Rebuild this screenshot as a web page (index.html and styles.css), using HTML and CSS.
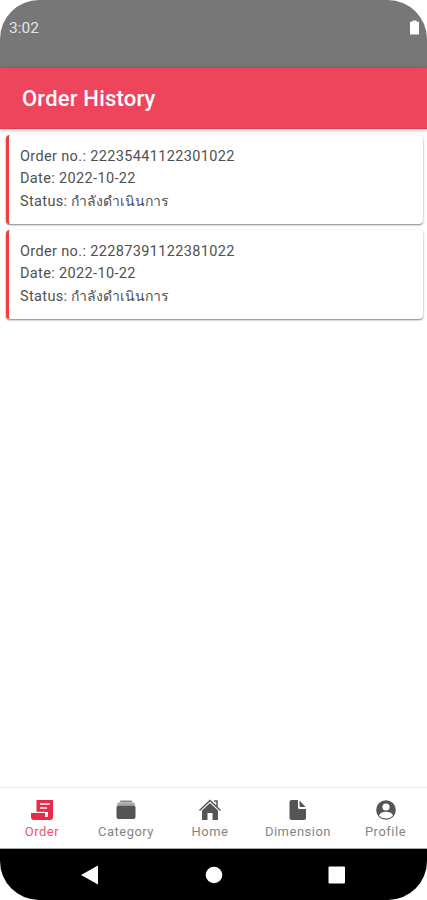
FILE: index.html
```html
<!DOCTYPE html>
<html lang="th">

<head>
  <title>Order History</title>
  <meta charset="UTF-8">
  <meta name="viewport" content="width=device-width, initial-scale=1.0">
  <link rel="stylesheet" href="styles.css">
</head>

<body>
  <div class="phone">
    <div class="status">
      <span class="time">3:02</span>
      <svg class="battery" width="9" height="15" viewBox="0 0 9 15">
        <path d="M0 2l2.500-.5V.5h4v1L9 2v12.500H0z" fill="#fff" />
      </svg>
    </div>
    <header class="bar">
      <h1>Order History</h1>
    </header>

    <main class="list">
      <div class="card">
        <p>Order no.: 22235441122301022</p>
        <p>Date: 2022-10-22</p>
        <p>Status: <span class="thai">กำลังดำเนินการ</span></p>
      </div>
      <div class="card">
        <p>Order no.: 22287391122381022</p>
        <p>Date: 2022-10-22</p>
        <p>Status: <span class="thai">กำลังดำเนินการ</span></p>
      </div>
    </main>

    <nav class="tabs">
      <a class="tab active">
        <svg width="24" height="22" viewBox="0 0 24 22">
          <path d="M6.500 1H23v17.500a2.500 2.500 0 0 1-5 0V13H6.500z" fill="currentColor" />
          <path d="M1 14h14v4.500q0 1.500 1.500 2.500H4q-3 0-3-3z" fill="currentColor" />
          <path d="M15 18h5v3h-5z" fill="currentColor" />
          <path d="M10 5h10M10 9h7" stroke="#fff" stroke-width="1.300" />
          <path d="M6 13.300h10v4.500" stroke="#fff" stroke-width=".8" fill="none" />
        </svg>
        <span>Order</span>
      </a>
      <a class="tab">
        <svg width="24" height="22" viewBox="0 0 24 22">
          <path d="M6.500 1.500h11l1 2h-13z" fill="#888" />
          <path d="M4 3.500h16l1.500 3h-19z" fill="#aaa" />
          <rect x="2.500" y="6.500" width="19" height="13.500" rx="2" fill="currentColor" />
        </svg>
        <span>Category</span>
      </a>
      <a class="tab">
        <svg width="24" height="22" viewBox="0 0 24 22">
          <path d="M1.500 11.500L12 1.500l10.500 10M16 2h3v6" fill="none" stroke="currentColor" stroke-width="1.500" />
          <path d="M12 4l8 7.500V21h-5.500v-7h-5v7H4v-9.500z" fill="currentColor" />
        </svg>
        <span>Home</span>
      </a>
      <a class="tab">
        <svg width="24" height="22" viewBox="0 0 24 22">
          <path d="M5.500 1H12v7.500q0 1.500 1.500 1.500H20v9q0 2-2 2H5.500q-2 0-2-2V3q0-2 2-2zM13.500 1.500L19.500 8h-4.500q-1.500 0-1.500-1.500z" fill="currentColor" />
        </svg>
        <span>Dimension</span>
      </a>
      <a class="tab">
        <svg width="24" height="22" viewBox="0 0 24 22">
          <circle cx="12" cy="11" r="9.800" fill="currentColor" />
          <circle cx="12" cy="8" r="3.600" fill="#fff" />
          <path d="M5 16.200C6.500 13.500 9 12.800 12 12.800s5.500.7 7 3.400c-1.700 2.100-4.200 3.300-7 3.300s-5.300-1.200-7-3.300z" fill="#fff" />
        </svg>
        <span>Profile</span>
      </a>
    </nav>

    <div class="keys">
      <svg width="18" height="20" viewBox="0 0 18 20">
        <path d="M0 10L17 .5v19z" fill="#fff" />
      </svg>
      <svg width="18" height="18" viewBox="0 0 18 18">
        <circle cx="9" cy="9" r="8.300" fill="#fff" />
      </svg>
      <svg width="18" height="18" viewBox="0 0 18 18">
        <rect x=".5" y=".5" width="16.500" height="17" rx="1" fill="#fff" />
      </svg>
    </div>
  </div>
</body>

</html>
```
FILE: styles.css
```css
* {
  box-sizing: border-box;
}

body {
  margin: 0;
  background-color: #fff;
  font-family: Roboto, "Noto Sans", sans-serif;
}

.phone {
  display: flex;
  flex-direction: column;
  height: 900px;
  overflow: hidden;
  border-radius: 39px;
  background-color: #fff;
}

.status {
  display: flex;
  justify-content: space-between;
  height: 68px;
  padding: 19px 8px 0 9px;
  background-color: #777;
}

.time {
  color: #e4e4e4;
  font-size: 15.5px;
  line-height: 19px;
}

.battery {
  margin-top: 1px;
}

.bar {
  height: 61px;
  padding-left: 22px;
  background-color: #ee445c;
  border-bottom: 1px solid #d83f58;
  box-shadow: 0 1px 4px rgba(0, 0, 0, .3);
}

h1 {
  margin: 0;
  color: #fff;
  font-size: 22px;
  font-weight: 500;
  line-height: 61px;
  letter-spacing: .2px;
}

.list {
  flex: 1;
  padding: 6px 4px 0 6px;
}

.card {
  height: 89px;
  margin-bottom: 6px;
  padding: 11px 0 0 11px;
  border-left: 3px solid #f13c40;
  border-radius: 4px;
  background-color: #fff;
  box-shadow: 0 1px 2px rgba(0, 0, 0, .5);
}

.card p {
  height: 22px;
  margin: 0;
  color: #505050;
  font-size: 14.5px;
  line-height: 22px;
  letter-spacing: .35px;
}

.card .thai {
  font-size: 14px;
  letter-spacing: 0;
}

.tabs {
  display: grid;
  grid-template-columns: 84px 84px 84px 92px 83px;
  height: 62px;
  border-top: 1px solid #eee;
  border-bottom: 1px solid #aaa;
}

.tab {
  display: flex;
  flex-direction: column;
  align-items: center;
  padding-top: 11px;
  color: #555;
}

.tab span {
  color: #858585;
  font-size: 13px;
  line-height: 22px;
  letter-spacing: .5px;
}

.tab.active {
  color: #e92a49;
}

.tab.active span {
  color: #f0566b;
}

.keys {
  display: flex;
  justify-content: space-between;
  align-items: center;
  height: 51px;
  padding: 0 81px;
  background-color: #000;
}
```
